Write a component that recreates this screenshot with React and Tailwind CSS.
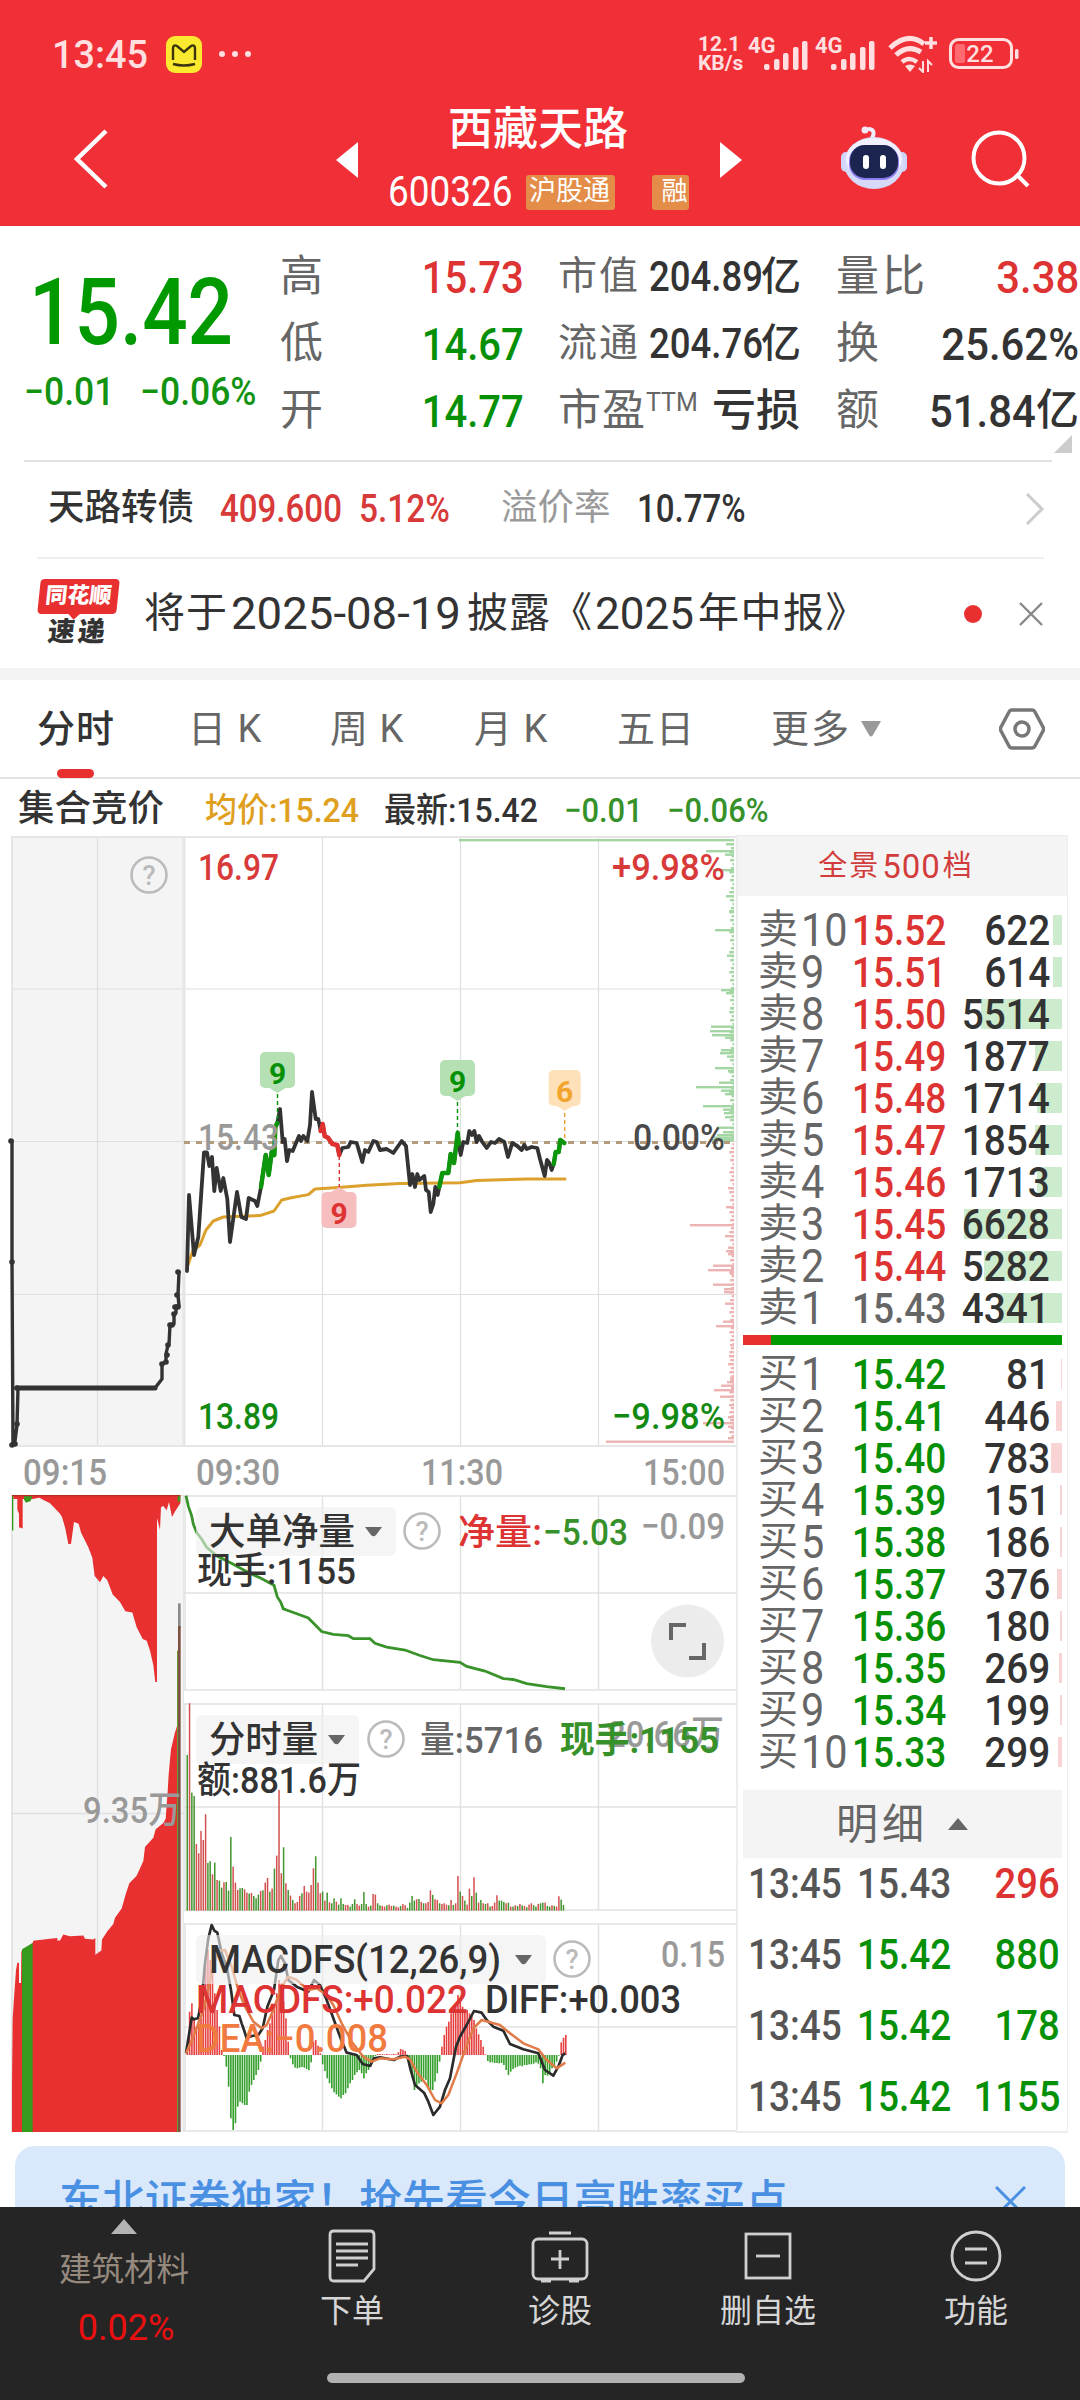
import React from "react";

const RED = "#dd3333";
const GREEN = "#069006";

const sells = [
  { n: 10, price: "15.52", qty: 622, bar: 9 },
  { n: 9, price: "15.51", qty: 614, bar: 9 },
  { n: 8, price: "15.50", qty: 5514, bar: 81 },
  { n: 7, price: "15.49", qty: 1877, bar: 27 },
  { n: 6, price: "15.48", qty: 1714, bar: 25 },
  { n: 5, price: "15.47", qty: 1854, bar: 27 },
  { n: 4, price: "15.46", qty: 1713, bar: 25 },
  { n: 3, price: "15.45", qty: 6628, bar: 98 },
  { n: 2, price: "15.44", qty: 5282, bar: 78 },
  { n: 1, price: "15.43", qty: 4341, bar: 63, flat: true },
];

const buys = [
  { n: 1, price: "15.42", qty: 81, bar: 1 },
  { n: 2, price: "15.41", qty: 446, bar: 6 },
  { n: 3, price: "15.40", qty: 783, bar: 11 },
  { n: 4, price: "15.39", qty: 151, bar: 2 },
  { n: 5, price: "15.38", qty: 186, bar: 2 },
  { n: 6, price: "15.37", qty: 376, bar: 5 },
  { n: 7, price: "15.36", qty: 180, bar: 2 },
  { n: 8, price: "15.35", qty: 269, bar: 3 },
  { n: 9, price: "15.34", qty: 199, bar: 2 },
  { n: 10, price: "15.33", qty: 299, bar: 4 },
];

const ticks = [
  { price: "15.43", qty: 296, priceColor: "text-[#555]", qtyColor: "text-[#dd3333]" },
  { price: "15.42", qty: 880, priceColor: "text-[#069006]", qtyColor: "text-[#069006]" },
  { price: "15.42", qty: 178, priceColor: "text-[#069006]", qtyColor: "text-[#069006]" },
  { price: "15.42", qty: 1155, priceColor: "text-[#069006]", qtyColor: "text-[#069006]" },
];

/* ---------- chart data ---------- */

const auctionLine =
  "11,1141 12,1141 12,1262 13,1444 15,1441 17,1425 18,1388 155,1388 162,1379 162,1364 166,1362 166,1354 168,1345 169,1344 170,1325 174,1324 174,1314 176,1313 176,1306 179,1306 178,1295 179,1272 178,1272";
const auctionDots = [
  [11, 1141], [12, 1262], [12, 1445], [15, 1444], [17, 1424], [17, 1388], [162, 1364], [166, 1362], [167, 1355],
  [168, 1345], [170, 1325], [172, 1325], [174, 1314], [175, 1307], [178, 1307], [177, 1295], [178, 1272],
];

const priceLine =
  "187,1271 189,1195 194,1255 198.3,1237 204,1152.5 207,1152.5 209.3,1166 212,1157 214.3,1191 216.7,1168 220.7,1191 223.3,1178 227.3,1199 230,1242 237,1192 241.3,1217 246,1219 248.7,1198 255,1201 257.3,1206 261,1187 265.7,1155 268.7,1175 271.7,1152 274.3,1155 275.3,1127 277.3,1123 280,1109 282.7,1142 284.7,1139 287,1161 289.3,1150 292.7,1151 296,1143 299,1136 301,1141 303.3,1136 307.3,1141 310,1125 312,1092 315.7,1119 318.3,1119 320.7,1131 322.7,1124 324.7,1136 328.3,1138 332.3,1144 337.3,1145 339.3,1155 342.3,1148 348.3,1147 350.7,1142 356.7,1143 362.3,1162 365,1150 368.3,1152 373.3,1141 376.7,1142 380,1150 386.7,1149 393.3,1153 401.7,1141 406,1146 410,1185 412.3,1174 415,1187 417.3,1174 419.3,1180 424.3,1176 426,1190 428.7,1192 430.7,1212 433.3,1204 435.3,1187 437.7,1195 439.3,1187 442.3,1173 448.3,1173 450.7,1154 454,1163 457.7,1133 458.7,1144 460.7,1155 463.3,1142 467.3,1143 469.3,1131 472,1135 474.3,1131 476.7,1142 479,1136 482.3,1142 486.7,1148 491,1142 495,1143 499,1139 504.3,1142 508,1157 512.3,1143 517.3,1146 521.7,1150 524.3,1145 526.7,1149 531.7,1147 537.3,1148 540,1159 544.7,1176 547,1160 549.3,1163 551.7,1170 553.7,1164 555.7,1152 558.7,1152 560.3,1140 564.3,1143";
const rises = [
  "261,1187 265.7,1155 268.7,1175 271.7,1152 274.3,1155 275.3,1127 277.3,1123",
  "439.3,1187 442.3,1173 448.3,1173 450.7,1154 454,1163 457.7,1133 458.7,1144",
  "553.7,1164 555.7,1152 558.7,1152 560.3,1140 564.3,1143",
];
const fall = "320.7,1131 322.7,1124 324.7,1136 328.3,1138 332.3,1144 337.3,1145 339.3,1155";
const avgLine =
  "187,1268 192.7,1251 200,1245 206,1230 213.3,1221 223.3,1217 260,1215.6 274,1211 281.7,1200 290,1198 308.3,1194.6 315,1189 338.3,1187.4 366.7,1185.3 400,1183.6 460,1182.8 476.7,1180.5 526.7,1179 565,1179";

// [y, length] of the order depth along the right axis
const askDepth = [
  [840, 275], [844, 8], [851, 28], [854.5, 9], [870, 21], [896, 8], [911, 5], [930, 19], [955.5, 7], [990, 13],
  [993, 8], [1008, 4], [1026.5, 23], [1031, 24], [1035, 22], [1037.5, 9], [1050, 13], [1053, 14], [1056.5, 7],
  [1068, 19], [1071, 6], [1082.5, 15], [1087, 38], [1090.5, 13], [1094, 9], [1106, 31], [1109.5, 11], [1113, 10],
  [1117, 9], [1127.5, 17], [1132, 11], [1135, 17], [1137.5, 20], [1140, 22],
];
const bidDepth = [
  [1188, 6], [1207, 8], [1225, 44], [1236, 9], [1247.5, 6], [1251, 8], [1254, 6], [1265.5, 21], [1270, 26],
  [1273.5, 4], [1284.5, 21], [1289, 10], [1292, 10], [1303.5, 9], [1321.5, 11], [1326, 18], [1345, 4], [1356, 5],
  [1364, 6], [1377.5, 4], [1382, 7], [1385.5, 13], [1390, 20], [1396.5, 14], [1405, 5], [1417, 6], [1423, 31],
  [1426.5, 6], [1438, 6], [1441.5, 128],
];

const volumes =
  "467g 622r 354g 344g 200r 172r 239r 212r 289r 143g 148g 109r 144g 92r 90g 69g 85r 86g 60g 221g 132r 84r 62r 67g 68g 64r 54r 51g 53r 44g 37g 48g 59r 61g 84r 98r 57g 66r 126g 165r 362r 112r 190g 82r 62g 45r 32g 22r 26r 44r 52g 74r 57r 54r 77r 127r 163g 84r 52r 57g 30r 54g 25r 22g 37g 27r 18g 37g 20g 17r 17r 12g 20g 34g 20r 15r 20g 56g 20g 12r 15g 50r 48r 22g 16g 14r 12r 16g 18r 14r 15g 12r 10r 14g 20r 16r 8g 24g 44g 30g 34r 35g 26r 22g 22r 26r 61r 47g 34r 32r 22g 20r 22r 18r 16g 32r 17g 22r 104r 57g 44r 30g 18r 66r 44g 100r 54g 24r 32g 22r 20g 22r 12g 14r 24r 46r 30g 30g 26g 22r 24g 12r 12g 16r 14g 20r 16g 14r 10g 18r 22r 16g 12g 20r 22g 24g 24r 14g 12g 16r 14g 12r 43r 33g 17g".split(
    " "
  );

const macd = [
  30, 130, 155, 110, 85, 85, 110, 195, 275, 315, 285, 255, 185, 135, 85, 15, -3, -35, -95, -190, -225, -205, -155,
  -140, -145, -150, -150, -110, -90, -75, -60, -45, -20, 25, 45, 75, 95, 120, 150, 185, 225, 215, 160, 110, 40, -10,
  -28, -38, -40, -38, -36, -38, -42, -46, -22, 40, 45, 28, 5, -28, -48, -70, -85, -100, -112, -118, -125, -130, -120,
  -115, -100, -85, -75, -60, -52, -45, -55, -70, -55, -45, -35, -15, -3, 3, 3, 2, 2, 3, 2, 2, 3, 2, 8, 18, 16, 12,
  -8, -35, -60, -105, -95, -85, -80, -70, -75, -100, -110, -105, -80, -55, -20, 25, 60, 85, 100, 125, 130, 145, 180,
  160, 145, 130, 135, 125, 120, 105, 80, 62, 45, 25, 2, -18, -22, -22, -24, -24, -25, -24, -30, -45, -60, -50, -42,
  -38, -35, -32, -34, -30, -30, -28, -28, -26, -22, -26, -40, -85, -60, -62, -55, -40, -30, -20, -2, 38, 52, 60,
];

const diffLine =
  "48,1090 65,983 72,988 84,985 95,930 105,820 115,745 125,705 133,722 142,728 155,790 170,830 183,900 193,975 208,978 215,1000 222,1020 230,1045 245,1038 265,1035 278,1015 292,950 312,900 325,810 333,798 345,820 355,870 380,890 415,905 432,870 450,885 468,925 490,985 510,1040 530,1088 560,1095 578,1122 600,1128 612,1105 630,1102 650,1106 672,1110 690,1100 712,1098 722,1140 735,1185 762,1208 775,1235 790,1275 810,1250 825,1200 840,1165 858,1070 870,1040 890,1005 912,963 935,968 950,990 970,1010 1000,1022 1020,1062 1060,1078 1105,1090 1125,1140 1150,1157 1165,1130 1178,1095 1186,1090";
const deaLine =
  "48,1090 70,1040 100,960 130,830 145,782 165,780 185,830 205,900 225,950 250,995 275,1015 290,1005 310,960 335,890 355,860 380,870 415,900 440,895 470,915 490,945 515,1000 545,1055 580,1100 605,1115 630,1105 670,1108 705,1100 720,1108 740,1145 770,1185 795,1230 815,1240 835,1215 860,1150 885,1080 910,1015 935,990 990,1005 1020,1030 1060,1060 1105,1078 1130,1110 1160,1135 1186,1118";
const netLine =
  "558,37 565,62 575,85 580,105 590,125 605,140 620,160 650,180 700,200 750,222 780,232 822,250 832,278 842,290 850,306 870,312 925,328 965,360 1000,367 1045,370 1060,377 1110,377 1125,388 1160,397 1215,404 1260,417 1300,427 1380,433 1400,443 1455,454 1510,472 1540,474 1580,484 1615,488 1640,491 1695,496";

/* ---------- small pieces ---------- */

// Chart label, squeezed or stretched to the width w
const Label = ({ x, y, w, size = 37, fill = "#333", weight = 500, children }) => (
  <text x={x} y={y} textLength={w} lengthAdjust="spacingAndGlyphs" fontSize={size} fill={fill} fontWeight={weight}>
    {children}
  </text>
);

const Help = ({ x, y }) => (
  <g>
    <circle cx={x} cy={y} r="17.500" fill="none" stroke="#bbb" strokeWidth="2.600" />
    <text x={x} y={y + 10} fontSize="27" fontWeight="500" textAnchor="middle" fill="#bbb">
      ?
    </text>
  </g>
);

const Picker = ({ y, w, textW, size, children }) => (
  <g>
    <rect x="196" y={y} width={w} height="49" rx="6" fill="#efefef" fillOpacity="0.6" />
    <Label x={209} y={y + 38} w={textW} size={size}>
      {children}
    </Label>
    <path d={`M${196 + w - 31} ${y + 20}h17l-6 8q-2.500 2.500-5 0z`} fill="#666" />
  </g>
);

const Tag = ({ x, y, w = 35, bg, color, up, children }) => (
  <g>
    <rect x={x - w / 2} y={y} width={w} height="36" rx="5" fill={bg} />
    <path d={up ? `M${x - 8} ${y}l8-5 8 5z` : `M${x - 8} ${y + 36}l8 5 8-5z`} fill={bg} />
    <text x={x} y={y + 32} fontSize="30" fontWeight="700" textAnchor="middle" fill={color}>
      {children}
    </text>
  </g>
);

/* ---------- header ---------- */

const SignalBars = () => (
  <div className="relative w-[60px] h-[36px]">
    <span className="absolute left-0 top-[-1px] text-[22px] font-bold leading-none">4G</span>
    <svg className="absolute left-[16px] top-[4px]" width="46" height="31" fill="#ffdfdf">
      <rect x="0" y="24" width="5.500" height="6" rx="2" />
      <rect x="10" y="19" width="5.500" height="11" rx="2" />
      <rect x="19" y="13" width="5.500" height="17" rx="2" />
      <rect x="29" y="7" width="5.500" height="23" rx="2" />
      <rect x="38" y="1" width="5.500" height="29" rx="2" />
    </svg>
  </div>
);

const StatusBar = () => (
  <div className="h-[108px] flex items-center justify-between pl-[52px] pr-[61px] text-[#ffdfdf]">
    <div className="flex items-center">
      <span className="w-[114px] text-[39px] leading-none font-medium mt-[2px] origin-left scale-x-[.97]">13:45</span>
      <svg width="36" height="37" viewBox="0 0 36 37">
        <rect width="36" height="37" rx="9" fill="#fbe92f" />
        <path d="M7 24V13q0-5 4-3l7 6 7-6q4-2 4 3v11M7 28q11 3 22 0" fill="none" stroke="#3a3310" strokeWidth="2.400" />
      </svg>
      <div className="flex gap-[7px] ml-[17px]">
        <i className="w-[6px] h-[6px] rounded-full bg-[#ffdfdf]" />
        <i className="w-[6px] h-[6px] rounded-full bg-[#ffdfdf]" />
        <i className="w-[6px] h-[6px] rounded-full bg-[#ffdfdf]" />
      </div>
    </div>
    <div className="flex items-center">
      <div className="w-[50px] text-[21px] leading-[19px] font-bold">
        <p>12.1</p>
        <p>KB/s</p>
      </div>
      <SignalBars />
      <div className="w-[7px]" />
      <SignalBars />
      <svg className="ml-[13px]" width="50" height="38" viewBox="0 0 50 38" fill="none" stroke="#ffdfdf">
        <path d="M2 13Q20-4 36 9M8 20Q20 9 33 17" strokeWidth="5" />
        <path d="M14 27q7-6 15 0" strokeWidth="4.500" />
        <path d="M17 31l5 6 5-6q-5-3-10 0z" fill="#ffdfdf" stroke="none" />
        <path d="M43 2v12M37 8h12" strokeWidth="3.500" />
        <path d="M35 26v11l-4-4M40 37V26l4 4" strokeWidth="2" />
      </svg>
      <svg className="ml-[11px]" width="70" height="32" viewBox="0 0 70 32">
        <rect x="1.500" y="1.500" width="61" height="28" rx="8" fill="none" stroke="#ffdfdf" strokeWidth="3" />
        <rect x="6" y="6" width="10" height="19" rx="2" fill="#ff6a70" />
        <rect x="66" y="11" width="3.500" height="10" rx="1.500" fill="#ffdfdf" />
        <text x="31" y="24" fontSize="24" fontWeight="500" fill="#ffdfdf" textAnchor="middle">
          22
        </text>
      </svg>
    </div>
  </div>
);

const Robot = () => (
  <svg width="66" height="64" viewBox="0 0 66 64">
    <path d="M30 14q6-10-2-11" fill="none" stroke="#eef" strokeWidth="4" strokeLinecap="round" />
    <circle cx="24" cy="4" r="3.500" fill="#f4e8f4" />
    <rect x="0" y="26" width="10" height="20" rx="5" fill="#cfd4f8" />
    <rect x="56" y="26" width="10" height="20" rx="5" fill="#cfd4f8" />
    <ellipse cx="33" cy="37" rx="30" ry="26" fill="#d6d9f8" />
    <ellipse cx="33" cy="33" rx="28" ry="21" fill="#f0f0ff" />
    <rect x="8" y="19" width="50" height="35" rx="16" fill="#8d7cf0" />
    <rect x="9" y="19" width="48" height="33" rx="15" fill="#1c2550" />
    <rect x="22" y="29" width="6" height="14" rx="3" fill="#fff" />
    <rect x="39" y="29" width="6" height="14" rx="3" fill="#fff" />
  </svg>
);

const TitleBar = () => (
  <div className="h-[118px] flex items-center text-white">
    <svg className="ml-[73px] mt-[-16px]" width="36" height="62" fill="none" stroke="#fff" strokeWidth="4.500">
      <path d="M33 3L4 31l29 28" />
    </svg>
    <svg className="ml-[227px] mt-[-14px]" width="22" height="36" fill="#fff">
      <path d="M22 0v36L0 18z" />
    </svg>
    <div className="w-[301px] ml-[30px] flex flex-col">
      <h1 className="w-[300px] text-center text-[45px] leading-[46px] font-medium mt-[-17px]">西藏天路</h1>
      <div className="flex items-center h-[36px] mt-[21px]">
        <span className="w-[138px] text-[42px] leading-none origin-left scale-x-[.88]">600326</span>
        <span className="w-[91px] h-[35px] rounded-[3px] bg-[#e48d49] text-[27px] leading-[33px] pl-[3px]">沪股通</span>
        <span className="w-[37px] h-[35px] ml-[37px] rounded-[3px] bg-[#e48d49] text-[26px] leading-[33px] pl-[9px] overflow-hidden">
          融
        </span>
      </div>
    </div>
    <svg className="ml-[31px] mt-[-14px]" width="22" height="36" fill="#fff">
      <path d="M0 0v36l22-18z" />
    </svg>
    <div className="ml-[99px] mt-[-18px]">
      <Robot />
    </div>
    <svg className="ml-[63px] mt-[-16px]" width="60" height="60" fill="none" stroke="#fff" strokeWidth="4">
      <circle cx="29" cy="29" r="25.500" />
      <path d="M46 45l12 12" />
    </svg>
  </div>
);

/* ---------- quote ---------- */

const Quote = () => (
  <section className="relative h-[234px] flex">
    <div className="w-[280px] text-[#009900]">
      <div className="mt-[47px] ml-[29px] h-[80px] text-[93px] leading-[80px] font-medium origin-left scale-x-[.86] whitespace-nowrap">
        15.42
      </div>
      <div className="mt-[20px] flex text-[39px] leading-none text-[#129312] font-medium whitespace-nowrap">
        <span className="w-[91px] ml-[24px] origin-left scale-x-[.91]">−0.01</span>
        <span className="ml-[25px] origin-left scale-x-[.91]">−0.06%</span>
      </div>
    </div>
    <div className="w-[278px] mt-[17px]">
      {[
        ["高", "15.73", "text-[#dd3333]"],
        ["低", "14.67", "text-[#069006]"],
        ["开", "14.77", "text-[#069006]"],
      ].map(([k, v, c]) => (
        <div key={k} className="h-[67px] flex items-center justify-between pr-[34px] leading-none">
          <span className="text-[43px] text-[#666]">{k}</span>
          <span className={`text-[45px] font-medium mt-[2px] origin-right scale-x-[.89] ${c}`}>{v}</span>
        </div>
      ))}
    </div>
    <div className="w-[278px] mt-[17px] text-[#333]">
      {[
        ["市值", "204.89"],
        ["流通", "204.76"],
      ].map(([k, v]) => (
        <div key={k} className="h-[67px] flex items-center leading-none">
          <span className="w-[91px] text-[39px] tracking-[2px] text-[#666]">{k}</span>
          <span className="w-[112px] text-[42px] font-medium origin-left scale-x-[.87]">{v}</span>
          <span className="text-[40px] font-medium">亿</span>
        </div>
      ))}
      <div className="h-[67px] flex items-center leading-none whitespace-nowrap">
        <span className="w-[88px] text-[43px] tracking-[1px] text-[#666]">市盈</span>
        <span className="w-[66px] text-[25px] text-[#666] mt-[-17px]">TTM</span>
        <span className="text-[44px] font-medium">亏损</span>
      </div>
    </div>
    <div className="w-[243px] mt-[17px]">
      {[
        ["量比", "3.38", "", "text-[#dd3333]"],
        ["换", "25.62%", "", "text-[#333]"],
        ["额", "51.84", "亿", "text-[#333]"],
      ].map(([k, v, u, c]) => (
        <div key={k} className={`h-[67px] flex items-center leading-none whitespace-nowrap ${c}`}>
          <span className="text-[43px] tracking-[3px] text-[#666] shrink-0">{k}</span>
          <span className="ml-auto text-[45px] font-medium mt-[2px] origin-right scale-x-[.93]">{v}</span>
          <span className="text-[43px] font-medium">{u}</span>
        </div>
      ))}
    </div>
    <svg className="absolute left-[1054px] top-[209px]" width="18" height="18">
      <path d="M18 0v18H0z" fill="#ccc" />
    </svg>
  </section>
);

const BondRow = () => (
  <div className="h-[97px] mx-[24px] w-[1028px] border-t-[2px] border-[#e2e2e2] flex items-center pl-[24px] pb-[2px] leading-none whitespace-nowrap">
    <span className="w-[172px] text-[36.500px] font-medium text-[#333]">天路转债</span>
    <span className="w-[139px] text-[38px] font-medium text-[#d83a3a] origin-left scale-x-[.87]">409.600</span>
    <span className="w-[142px] text-[38px] font-medium text-[#d83a3a] origin-left scale-x-[.88]">5.12%</span>
    <span className="w-[136px] text-[36.500px] text-[#999]">溢价率</span>
    <span className="text-[38px] font-medium text-[#333] origin-left scale-x-[.87]">10.77%</span>
    <svg className="ml-auto mr-[7px]" width="20" height="34" fill="none" stroke="#ccc" strokeWidth="3">
      <path d="M2 2l15 15L2 32" />
    </svg>
  </div>
);

const NewsRow = () => (
  <div className="h-[111px] ml-[37px] w-[1007px] border-t-[2px] border-[#efefef] flex items-center leading-none whitespace-nowrap text-[#333]">
    <div className="w-[82px] flex flex-col items-center mt-[-2px]">
      <div className="relative -skew-x-6 w-[79px] h-[35px] rounded-[4px] bg-[#e83030] text-white text-[22px] font-black leading-[34px] text-center">
        同花顺
        <i className="absolute left-[33px] top-[31px] w-[8px] h-[8px] rotate-45 bg-[#e83030]" />
      </div>
      <div className="-skew-x-6 mt-[5px] text-[27px] font-black leading-[27px] tracking-[3px]">速递</div>
    </div>
    <span className="ml-[25px] text-[41px] tracking-[1px]">将于</span>
    <span className="ml-[3px] w-[236px] text-[44px] origin-left scale-x-[1.035]">2025-08-19</span>
    <span className="text-[41px] tracking-[1px]">披露《</span>
    <span className="ml-[2px] w-[103px] text-[44px]">2025</span>
    <span className="text-[41px] tracking-[1.500px]">年中报》</span>
    <i className="ml-auto w-[18px] h-[18px] rounded-full bg-[#e83030]" />
    <svg className="ml-[37px] mr-[1px]" width="24" height="24" stroke="#888" strokeWidth="2.400">
      <path d="M1 1l22 22M23 1L1 23" />
    </svg>
  </div>
);

const Tabs = () => (
  <nav className="relative h-[99px] border-t-[12px] border-[#f4f4f4] box-content">
    <div className="h-[99px] border-b-[2px] border-[#e4e4e4] flex items-center text-[38px] leading-none text-[#666] whitespace-nowrap">
      <span className="ml-[37px] w-[151px] font-medium text-[#333] tracking-[1px]">分时</span>
      <span className="w-[142px] tracking-[1px]">日 K</span>
      <span className="w-[144px] tracking-[1px]">周 K</span>
      <span className="w-[143px] tracking-[1px]">月 K</span>
      <span className="w-[154px] tracking-[1px]">五日</span>
      <span className="w-[89px] tracking-[2px]">更多</span>
      <svg width="22" height="18" fill="#999">
        <path d="M1 1h20l-8 14q-2 3-4 0z" />
      </svg>
      <svg className="ml-auto mr-[35px]" width="46" height="42" viewBox="0 0 46 42" fill="none" stroke="#777" strokeWidth="3.500">
        <path d="M13 2h20q2 0 3 2l8 15q1 2 0 4l-8 15q-1 2-3 2H13q-2 0-3-2L2 23q-1-2 0-4l8-15q1-2 3-2z" />
        <circle cx="23" cy="21" r="7" />
      </svg>
    </div>
    <i className="absolute left-[57px] top-[89px] w-[37px] h-[9px] rounded-full bg-[#e83030]" />
  </nav>
);

const Legend = () => (
  <div className="h-[57px] pt-[4px] flex items-center leading-none whitespace-nowrap font-medium text-[34px] text-[#333]">
    <span className="ml-[18px] w-[187px] text-[36.500px]">集合竞价</span>
    <span className="w-[179px] origin-left scale-x-[.94] text-[#dea01e]">均价:15.24</span>
    <span className="w-[180px] origin-left scale-x-[.94]">最新:15.42</span>
    <span className="w-[103px] origin-left scale-x-[.91] text-[#37912a]">−0.01</span>
    <span className="origin-left scale-x-[.91] text-[#37912a]">−0.06%</span>
  </div>
);

/* ---------- charts ---------- */

const PriceChart = () => (
  <svg className="block" width="737" height="659" viewBox="0 836 737 659">
    <rect x="11" y="837" width="172" height="609" fill="#f4f4f4" />
    <g stroke="#dedede" strokeWidth="1.200" fill="none">
      <path d="M97.500 837v609M322.500 837v609M460.500 837v609M598.500 837v609M12 989h725M12 1141.500h725M12 1294.500h725" />
    </g>
    <g stroke="#e6e6e6" strokeWidth="2" fill="none">
      <path d="M11 837h726M11 1446h726M12 837v609M737 837v609" />
      <path d="M184 837v609" strokeWidth="3" />
    </g>
    <g fill="#a3d6a3">
      {askDepth.map(([y, l]) => (
        <rect key={y} x={734 - l} y={y - 1} width={l} height="2.400" />
      ))}
    </g>
    <g fill="#edb3b3">
      {bidDepth.map(([y, l]) => (
        <rect key={y} x={734 - l} y={y - 1} width={l} height="2.400" />
      ))}
    </g>
    {Array.from({ length: 149 }, (_, i) => {
      const l = 1.5 + ((i * 7) % 5) * 0.8;
      return (
        <rect key={i} x={734 - l} y={843 + i * 4} width={l} height="2.400" fill={i < 75 ? "#a3d6a3" : "#edb3b3"} />
      );
    })}
    <path d="M184 1142.400h553" stroke="#b39d7c" strokeWidth="3" strokeDasharray="6 6" />
    <g fill="none" strokeLinejoin="round" strokeLinecap="round">
      <polyline points={avgLine} stroke="#dba12c" strokeWidth="3" />
      <polyline points={auctionLine} stroke="#333" strokeWidth="3.400" />
      <path d="M17 1388H155" stroke="#333" strokeWidth="5" />
      <polyline points={priceLine} stroke="#333" strokeWidth="3.800" />
      {rises.map((p) => (
        <polyline key={p} points={p} stroke="#0c960c" strokeWidth="4.500" />
      ))}
      <polyline points={fall} stroke="#e03030" strokeWidth="4.500" />
    </g>
    {auctionDots.map(([x, y], i) => (
      <circle key={i} cx={x} cy={y} r="2.800" fill="#333" />
    ))}
    <g strokeWidth="1.400" strokeDasharray="4 3">
      <path d="M277.500 1094v32M457.500 1102v32" stroke="#069006" />
      <path d="M339.300 1156v32" stroke={RED} />
      <path d="M564.700 1113v28" stroke="#e8a030" />
    </g>
    <Tag x={277.5} y={1052} bg="#b4e0b4" color={GREEN}>9</Tag>
    <Tag x={339} y={1192} bg="#f6bebe" color={RED} up>9</Tag>
    <Tag x={457.5} y={1060} bg="#b4e0b4" color={GREEN}>9</Tag>
    <Tag x={564.7} y={1070} w={32} bg="#fee1b8" color="#f2a52c">6</Tag>
    <Help x={149} y={875} />
    <Label x={198} y={880} w={81} fill="#d83a3a">16.97</Label>
    <Label x={612} y={880} w={113} fill="#d83a3a">+9.98%</Label>
    <Label x={198} y={1150} w={81} fill="#999">15.43</Label>
    <Label x={633} y={1150} w={92} fill="#4a4a4a">0.00%</Label>
    <Label x={198} y={1429} w={81} fill="#128a12">13.89</Label>
    <Label x={612} y={1429} w={113} fill="#128a12">−9.98%</Label>
    <g>
      <Label x={23} y={1485} w={84} fill="#999">09:15</Label>
      <Label x={196} y={1485} w={84} fill="#999">09:30</Label>
      <Label x={421} y={1485} w={82} fill="#999">11:30</Label>
      <Label x={643} y={1485} w={82} fill="#999">15:00</Label>
    </g>
  </svg>
);

const AuctionVolume = () => (
  <svg className="block shrink-0" width="184" height="639" viewBox="0 1495 184 639">
    <rect x="11" y="1495" width="172" height="637" fill="#f4f4f4" />
    <path d="M12 1495v637M184 1495v637M12 1495.500h172M97.500 1495v637M12 1813.500h172" stroke="#e0e0e0" strokeWidth="1.500" />
    <g transform="translate(0 1480) scale(.33333 .42088)">
      <polygon
        fill="#e83030"
        points="40,37 40,45 52,45 52,70 57,80 57,112 68,115 68,45 98,45 118,42 132,48 150,55 180,80 186,88 196,115 205,152 213,152 222,100 236,104 243,125 265,160 277,185 284,228 300,243 310,228 322,238 338,272 360,290 376,312 397,315 410,350 428,378 440,382 450,405 460,440 466,480 471,480 471,90 480,118 483,65 490,62 500,72 507,52 516,88 525,75 541,55 541,37"
      />
      <path d="M36 37h4v83h-4zM72 37h26l-6 13-14 4-6-7zM533 37h8v14h-8z" fill="#369a1c" />
      <path d="M36 37h505" stroke="#b03020" strokeWidth="3" />
      <polygon
        fill="#e83030"
        points="36,1549 36,1440 38,1280 43,1220 48,1165 52,1147 57,1147 57,1195 63,1195 64,1120 98,1100 100,1095 150,1090 172,1088 172,1094 180,1094 190,1080 210,1084 250,1082 255,1090 280,1092 286,1088 286,1128 304,1118 306,1092 322,1072 340,1055 345,1040 365,1018 378,982 388,958 410,940 430,905 435,872 460,850 467,830 490,815 497,805 503,740 506,700 513,640 525,600 532,582 532,1549"
      />
      <path d="M66 1549V1115l32-15v449z" fill="#369a1c" />
      <path d="M531 405h5v1144h-5z" fill="#6a9a30" />
      <path d="M534 293h8v60h-8z" fill="#8a8a8a" />
      <path d="M534 347h8v1202h-8z" fill="#7d5044" />
    </g>
    <Label x={83} y={1823} w={98} size={37} fill="#999">9.35万</Label>
  </svg>
);

const PanelFrame = ({ top, height, children }) => (
  <svg className="block" width="553" height={height} viewBox={`184 ${top} 553 ${height}`}>
    {children}
  </svg>
);

const Grid = ({ t, m, b }) => (
  <path
    d={`M184 ${t}H737M184 ${m}H737M184 ${b}H737M185 ${t}V${b}M322.500 ${t}V${b}M460.500 ${t}V${b}M598.500 ${t}V${b}M737 ${t}V${b}`}
    stroke="#e2e2e2"
    strokeWidth="1.500"
    fill="none"
  />
);

const NetPanel = () => (
  <PanelFrame top={1495} height={202}>
    <Grid t={1496} m={1593} b={1690} />
    <g transform="translate(0 1480) scale(.33333 .42088)">
      <polyline points={netLine} fill="none" stroke="#39932a" strokeWidth="2.800" vectorEffect="non-scaling-stroke" />
    </g>
    <Picker y={1507} w={200} textW={146} size={37}>大单净量</Picker>
    <Help x={422} y={1531} />
    <Label x={458} y={1545} w={84} size={36} fill={RED}>净量:</Label>
    <Label x={543} y={1545} w={85} size={37} fill="#37912a">−5.03</Label>
    <Label x={641} y={1539} w={84} size={37} fill="#999">−0.09</Label>
    <Label x={197} y={1584} w={159} size={37}>现手:1155</Label>
    <circle cx="687.500" cy="1641" r="36.500" fill="#ececec" />
    <path d="M671 1640v-15h15M704 1643v15h-15" fill="none" stroke="#666" strokeWidth="4" />
  </PanelFrame>
);

const VolumePanel = () => (
  <PanelFrame top={1697} height={219}>
    <Grid t={1704} m={1807} b={1910} />
    {volumes.map((v, i) => {
      const h = parseInt(v, 10) / 3;
      return (
        <rect
          key={i}
          x={186.5 + i * 2.294}
          y={1910.6 - h}
          width="1.500"
          height={h}
          fill={v.endsWith("r") ? "#d2504f" : "#41952f"}
        />
      );
    })}
    <Picker y={1715} w={163} textW={109} size={37}>分时量</Picker>
    <Help x={386} y={1739} />
    <Label x={420} y={1753} w={123} size={37} fill="#666">量:5716</Label>
    <Label x={607} y={1747} w={117} size={37} fill="#999">20.66万</Label>
    <Label x={560} y={1753} w={159} size={37} fill="#37912a" weight={700}>现手:1155</Label>
    <Label x={197} y={1793} w={164} size={37}>额:881.6万</Label>
  </PanelFrame>
);

const MacdPanel = () => (
  <PanelFrame top={1916} height={218}>
    <Grid t={1924} m={2027} b={2131} />
    {macd.map((v, i) => (
      <rect
        key={i}
        x={186.5 + i * 2.294}
        y={v > 0 ? 2055 - v / 3 : 2055}
        width="1.600"
        height={Math.abs(v) / 3}
        fill={v > 0 ? "#e5403f" : "#359f2c"}
      />
    ))}
    <g transform="translate(170 1690) scale(.33333)" fill="none" strokeLinejoin="round">
      <polyline points={diffLine} stroke="#2b2b2b" strokeWidth="8" />
      <polyline points={deaLine} stroke="#e07a46" strokeWidth="7.500" />
    </g>
    <Picker y={1935} w={350} textW={292} size={38}>MACDFS(12,26,9)</Picker>
    <Help x={572} y={1959} />
    <Label x={661} y={1967} w={64} size={37} fill="#999">0.15</Label>
    <Label x={196} y={2013} w={272} size={39} fill={RED}>MACDFS:+0.022</Label>
    <Label x={485} y={2013} w={196} size={39}>DIFF:+0.003</Label>
    <Label x={196} y={2052} w={192} size={39} fill="#f07a40">DEA:−0.008</Label>
  </PanelFrame>
);

/* ---------- order book ---------- */

const Level = ({ side, n, price, qty, bar, flat }) => {
  const sell = side === "卖";
  const color = flat ? "text-[#666]" : sell ? "text-[#dd3333]" : "text-[#069006]";
  return (
    <div className="relative h-[42px] flex items-center leading-none whitespace-nowrap">
      <i
        className={`absolute right-[5px] top-[6px] h-[30px] ${sell ? "bg-[#cdebcd]" : "bg-[#f9d4d4]"}`}
        style={{ width: bar }}
      />
      <span className="relative ml-[20px] w-[43px] text-[40px] text-[#666]">{side}</span>
      <span className="relative w-[51px] text-[46px] text-[#666] origin-left scale-x-[.9]">{n}</span>
      <span className={`relative w-[100px] text-[43px] font-medium origin-left scale-x-[.86] ${color}`}>{price}</span>
      <span className="relative ml-auto mr-[17px] text-[43px] font-medium text-[#333] origin-right scale-x-[.9]">
        {qty}
      </span>
    </div>
  );
};

const OrderBook = () => (
  <aside className="w-[332px] h-[1298px] -mt-px border-[2px] border-[#ededed] border-t border-r">
    <div className="h-[60px] bg-[#f4f4f4] flex items-center justify-center pr-[15px] text-[#d23c3c] leading-none">
      <span className="text-[29px] tracking-[2px]">全景</span>
      <span className="text-[33px] tracking-[1px] mx-[2px]">500</span>
      <span className="text-[29px]">档</span>
    </div>
    <div className="pt-[13px]">
      {sells.map((s) => (
        <Level key={s.n} side="卖" {...s} />
      ))}
    </div>
    <div className="mt-[6px] ml-[5px] w-[319px] h-[10px] flex">
      <i className="w-[28px] bg-[#e83030]" />
      <i className="flex-1 bg-[#009a00]" />
    </div>
    <div className="pt-[8px]">
      {buys.map((b) => (
        <Level key={b.n} side="买" {...b} />
      ))}
    </div>
    <div className="mt-[17px] ml-[5px] w-[319px] h-[68px] bg-[#f4f4f4] flex items-center text-[42px] leading-none text-[#666]">
      <span className="ml-[93px] mt-[2px] tracking-[4px]">明细</span>
      <svg className="ml-[20px]" width="20" height="12" fill="#666">
        <path d="M0 12L10 0l10 12z" />
      </svg>
    </div>
    <div className="mt-[-10px]">
      {ticks.map((t) => (
        <div
          key={t.qty}
          className="h-[71px] flex items-center pl-[10px] pr-[7px] text-[42px] leading-none font-medium text-[#555]"
        >
          <span className="w-[109px] origin-left scale-x-[.88]">13:45</span>
          <span className={`w-[100px] origin-left scale-x-[.88] ${t.priceColor}`}>{t.price}</span>
          <span className={`ml-auto origin-right scale-x-[.91] ${t.qtyColor}`}>{t.qty}</span>
        </div>
      ))}
    </div>
  </aside>
);

/* ---------- bottom ---------- */

const Banner = () => (
  <div className="mt-[13px] mx-[15px] h-[61px] overflow-hidden">
    <div className="h-[110px] rounded-[20px] bg-[#dae8fb] flex items-center pl-[44px] pr-[39px] text-[#4a90e2] text-[42.900px] leading-none whitespace-nowrap">
      <span className="font-medium">东北证券独家！抢先看今日高胜率买点</span>
      <svg className="ml-auto" width="31" height="31" stroke="#4a90e2" strokeWidth="3">
        <path d="M1 1l29 29M30 1L1 30" />
      </svg>
    </div>
  </div>
);

const navItems = [
  {
    label: "下单",
    icon: (
      <>
        <path d="M8 4h36q4 0 4 4v34l-10 12H8q-4 0-4-4V8q0-4 4-4z" />
        <path d="M10 17h32M10 24h32M10 31h32M10 38h22" />
      </>
    ),
  },
  {
    label: "诊股",
    icon: (
      <>
        <rect x="-1" y="12" width="54" height="40" rx="5" />
        <path d="M15 6h22M26 23v19M17 32h18M7 54h10M35 54h10" />
      </>
    ),
  },
  {
    label: "删自选",
    icon: (
      <>
        <rect x="4" y="7" width="44" height="44" />
        <path d="M14 29h24" />
      </>
    ),
  },
  {
    label: "功能",
    icon: (
      <>
        <circle cx="26" cy="29" r="24" />
        <path d="M15 22h22M15 36h22" />
      </>
    ),
  },
];

const BottomNav = () => (
  <footer className="h-[193px] bg-[#252525] flex flex-col">
    <div className="h-[166px] w-full flex">
      <div className="w-[248px] flex flex-col items-center leading-none">
        <svg className="mt-[12px]" width="26" height="15" fill="#b4b4b4">
          <path d="M0 15L13 0l13 15z" />
        </svg>
        <span className="mt-[20px] text-[32.500px] text-[#968a7e]">建筑材料</span>
        <span className="mt-[23px] ml-[4px] text-[36px] text-[#ea1010]">0.02%</span>
      </div>
      {navItems.map(({ label, icon }) => (
        <div key={label} className="w-[208px] flex flex-col items-center leading-none text-[32px] text-[#d6d6d6]">
          <svg
            className="mt-[20px] overflow-visible"
            width="52"
            height="58"
            fill="none"
            stroke="#cfcfcf"
            strokeWidth="2.800"
          >
            {icon}
          </svg>
          <span className="mt-[10px]">{label}</span>
        </div>
      ))}
    </div>
    <div className="ml-[327px] w-[418px] h-[10px] rounded-full bg-[#b2b2b2]" />
  </footer>
);

export default function App() {
  return (
    <div className="w-[1080px] h-[2400px] overflow-hidden bg-white font-['Roboto','Noto_Sans_CJK_SC',sans-serif]">
      <header className="h-[226px] bg-[#f12f37]">
        <StatusBar />
        <TitleBar />
      </header>
      <Quote />
      <BondRow />
      <NewsRow />
      <Tabs />
      <Legend />
      <main className="flex h-[1297px]">
        <div className="w-[736px]">
          <PriceChart />
          <div className="flex">
            <AuctionVolume />
            <div>
              <NetPanel />
              <VolumePanel />
              <MacdPanel />
            </div>
          </div>
        </div>
        <OrderBook />
      </main>
      <Banner />
      <BottomNav />
    </div>
  );
}
